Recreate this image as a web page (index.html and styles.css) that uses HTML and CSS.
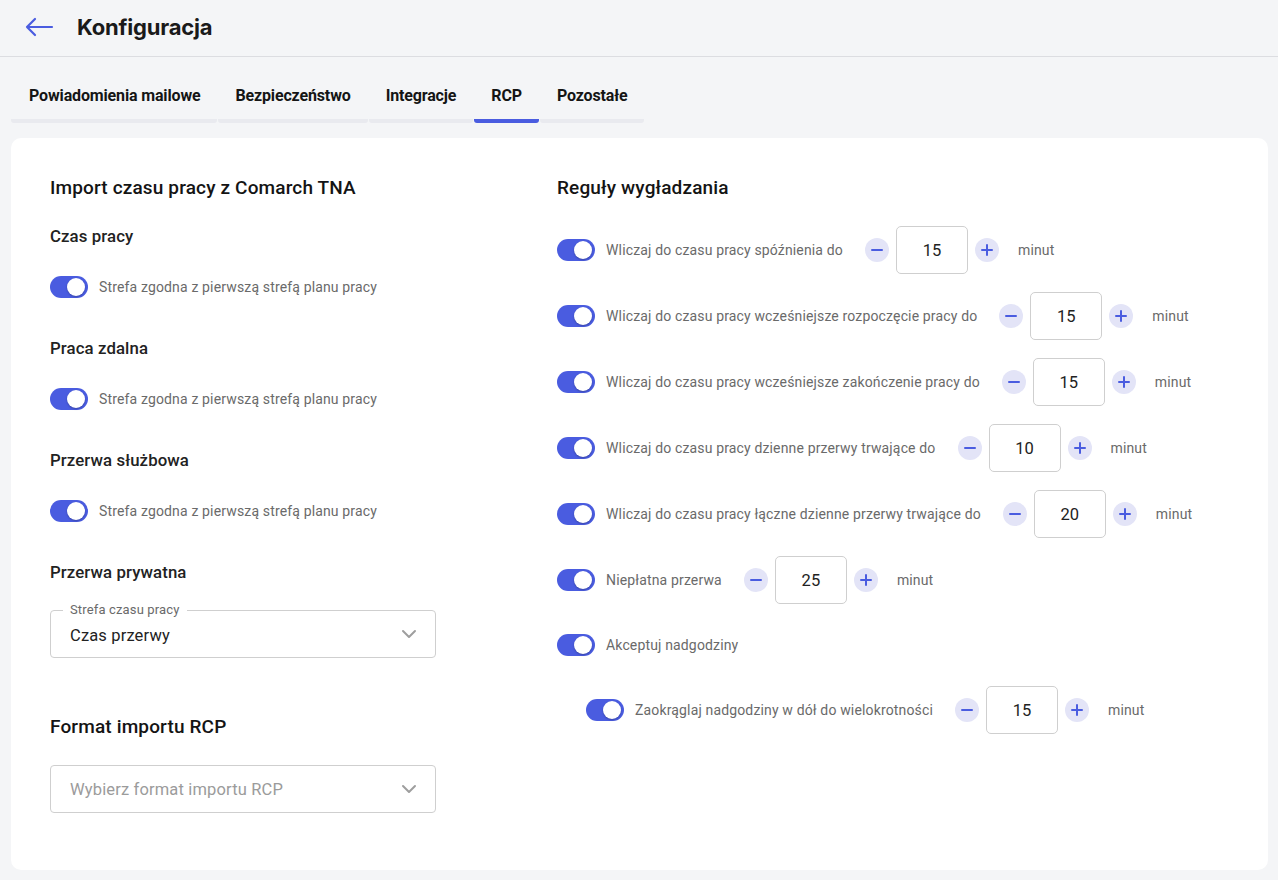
FILE: index.html
```html
<!DOCTYPE html>
<html lang="pl">
<head>
<meta charset="utf-8">
<title>Konfiguracja</title>
<link rel="stylesheet" href="styles.css">
</head>
<body>
<header class="topbar">
  <svg class="back" width="30" height="20" viewBox="0 0 30 20"><path d="M28 10H3M11 2L3 10l8 8" fill="none" stroke="#4a5ce0" stroke-width="2.2" stroke-linecap="round" stroke-linejoin="round"/></svg>
  <h1 class="title">Konfiguracja</h1>
</header>
<nav class="tabs">
  <div class="tab">Powiadomienia mailowe</div>
  <div class="tab">Bezpieczeństwo</div>
  <div class="tab">Integracje</div>
  <div class="tab active">RCP</div>
  <div class="tab">Pozostałe</div>
</nav>
<main class="card">
  <section class="col left">
    <h2 class="section-title">Import czasu pracy z Comarch TNA</h2>
    <h3 class="sub">Czas pracy</h3>
    <div class="row"><span class="toggle"></span><span class="label">Strefa zgodna z pierwszą strefą planu pracy</span></div>
    <h3 class="sub">Praca zdalna</h3>
    <div class="row"><span class="toggle"></span><span class="label">Strefa zgodna z pierwszą strefą planu pracy</span></div>
    <h3 class="sub">Przerwa służbowa</h3>
    <div class="row"><span class="toggle"></span><span class="label">Strefa zgodna z pierwszą strefą planu pracy</span></div>
    <h3 class="sub">Przerwa prywatna</h3>
    <div class="select">
      <span class="legend">Strefa czasu pracy</span>
      <span class="value">Czas przerwy</span>
      <svg class="chev" width="16" height="10" viewBox="0 0 16 10"><path d="M2 2l6 6 6-6" fill="none" stroke="#9e9e9e" stroke-width="2" stroke-linecap="round" stroke-linejoin="round"/></svg>
    </div>
    <h2 class="section-title fmt">Format importu RCP</h2>
    <div class="select">
      <span class="value placeholder">Wybierz format importu RCP</span>
      <svg class="chev" width="16" height="10" viewBox="0 0 16 10"><path d="M2 2l6 6 6-6" fill="none" stroke="#9e9e9e" stroke-width="2" stroke-linecap="round" stroke-linejoin="round"/></svg>
    </div>
  </section>
  <section class="col right">
    <h2 class="section-title">Reguły wygładzania</h2>
    <div class="rules">
      <div class="rule"><span class="toggle"></span><span class="label">Wliczaj do czasu pracy spóźnienia do</span>
        <div class="stepper"><span class="btn minus"></span><span class="num">15</span><span class="btn plus"></span></div><span class="label unit">minut</span></div>
      <div class="rule"><span class="toggle"></span><span class="label">Wliczaj do czasu pracy wcześniejsze rozpoczęcie pracy do</span>
        <div class="stepper"><span class="btn minus"></span><span class="num">15</span><span class="btn plus"></span></div><span class="label unit">minut</span></div>
      <div class="rule"><span class="toggle"></span><span class="label">Wliczaj do czasu pracy wcześniejsze zakończenie pracy do</span>
        <div class="stepper"><span class="btn minus"></span><span class="num">15</span><span class="btn plus"></span></div><span class="label unit">minut</span></div>
      <div class="rule"><span class="toggle"></span><span class="label">Wliczaj do czasu pracy dzienne przerwy trwające do</span>
        <div class="stepper"><span class="btn minus"></span><span class="num">10</span><span class="btn plus"></span></div><span class="label unit">minut</span></div>
      <div class="rule"><span class="toggle"></span><span class="label">Wliczaj do czasu pracy łączne dzienne przerwy trwające do</span>
        <div class="stepper"><span class="btn minus"></span><span class="num">20</span><span class="btn plus"></span></div><span class="label unit">minut</span></div>
      <div class="rule"><span class="toggle"></span><span class="label">Niepłatna przerwa</span>
        <div class="stepper"><span class="btn minus"></span><span class="num">25</span><span class="btn plus"></span></div><span class="label unit">minut</span></div>
      <div class="rule"><span class="toggle"></span><span class="label">Akceptuj nadgodziny</span></div>
      <div class="rule indent"><span class="toggle"></span><span class="label">Zaokrąglaj nadgodziny w dół do wielokrotności</span>
        <div class="stepper"><span class="btn minus"></span><span class="num">15</span><span class="btn plus"></span></div><span class="label unit">minut</span></div>
    </div>
  </section>
</main>
</body>
</html>
```
FILE: styles.css
```css
* { box-sizing: border-box; }
html, body { margin: 0; padding: 0; }
body {
  background: #f4f5f7;
  font-family: Roboto, "Noto Sans", Arial, sans-serif;
  color: #1c1c1c;
  width: 1278px;
  height: 880px;
  overflow: hidden;
}
.topbar {
  height: 57px;
  border-bottom: 1px solid #dcdde1;
  display: flex;
  align-items: center;
  padding-left: 24px;
  padding-bottom: 2px;
}
.back { display: block; margin-right: 23px; }
.title {
  margin: 0;
  font-family: Inter, Roboto, sans-serif;
  font-size: 22px;
  font-weight: 700;
  color: #1a1a1a;
  letter-spacing: -0.2px;
}
.tabs {
  display: flex;
  gap: 1px;
  padding: 0 11px;
  margin-top: 23px;
}
.tab {
  font-size: 16px;
  font-weight: 700;
  color: #151515;
  padding: 6px 17px 14px 17px;
  border-bottom: 4px solid #e9eaef;
  border-radius: 0 0 3px 3px;
  letter-spacing: -0.15px;
}
.tab:first-child { padding-left: 18px; }
.tab.active { border-bottom-color: #4a5ce0; }
.card {
  margin: 15px 10px 0 11px;
  background: #fff;
  border-radius: 10px;
  height: 732px;
  display: flex;
  padding: 36px 0 0 39px;
}
.col.left { width: 386px; }
.col.right { margin-left: 121px; flex: 1; }
.section-title {
  margin: 0;
  font-size: 19px;
  font-weight: 500;
  line-height: 28px;
  color: #141414;
  letter-spacing: 0.15px;
}
.sub {
  margin: 23px 0 0;
  font-size: 16.8px;
  font-weight: 500;
  line-height: 22px;
  color: #222;
  letter-spacing: 0.1px;
}
.row {
  display: flex;
  align-items: center;
  height: 22px;
  margin: 29px 0 39px;
}
.row + .sub { margin-top: 0; }
.toggle {
  width: 38px;
  height: 22px;
  border-radius: 11px;
  background: #4a5ce0;
  position: relative;
  flex: none;
}
.toggle::after {
  content: "";
  position: absolute;
  right: 3px;
  top: 2px;
  width: 18px;
  height: 18px;
  border-radius: 50%;
  background: #fff;
  box-shadow: 0 1px 2px rgba(0,0,0,0.25);
}
.label {
  font-size: 14px;
  color: #6a6a6a;
  margin-left: 11px;
  white-space: nowrap;
  letter-spacing: 0.15px;
}
.select {
  margin-top: 27px;
  height: 48px;
  border: 1px solid #cfcfcf;
  border-radius: 4px;
  display: flex;
  align-items: center;
  padding: 0 18px 0 19px;
  position: relative;
}
.legend {
  position: absolute;
  left: 12px;
  top: -9px;
  background: #fff;
  padding: 0 7px;
  font-size: 13px;
  line-height: 16px;
  color: #6a6a6a;
  letter-spacing: 0.15px;
}
.value { font-size: 16.5px; color: #222; flex: 1; padding-top: 2px; letter-spacing: 0.15px; }
.value.placeholder { color: #9b9b9b; padding-top: 0; }
.chev { display: block; }
.section-title.fmt { margin-top: 55px; }
.fmt + .select { margin-top: 24px; }
.rules { display: flex; flex-direction: column; margin-top: 24px; }
.rule {
  display: flex;
  align-items: center;
  height: 48px;
  margin-bottom: 18px;
}
.rule:nth-child(6), .rule:nth-child(7) { margin-bottom: 17px; }
.rule.indent { padding-left: 29px; }
.stepper {
  display: flex;
  align-items: center;
  gap: 7px;
  margin-left: 22px;
}
.btn {
  width: 24px;
  height: 24px;
  border-radius: 50%;
  background: #e3e4f7;
  position: relative;
}
.btn::before, .plus::after {
  content: "";
  position: absolute;
  left: 6px;
  top: 11px;
  width: 12px;
  height: 2px;
  background: #4a5ce0;
  border-radius: 1px;
}
.plus::after {
  left: 11px;
  top: 6px;
  width: 2px;
  height: 12px;
}
.num {
  width: 72px;
  height: 48px;
  border: 1px solid #cfcfcf;
  border-radius: 5px;
  display: flex;
  align-items: center;
  justify-content: center;
  font-size: 16.5px;
  color: #222;
}
.unit { margin-left: 19px; }
```
